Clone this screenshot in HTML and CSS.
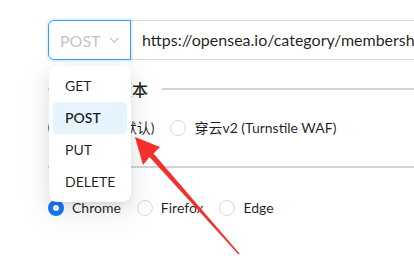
FILE: index.html
```html
<!DOCTYPE html>
<html lang="zh-CN">
<head>
<meta charset="utf-8">
<link rel="stylesheet" href="styles.css">
</head>
<body>
<div class="page">
  <div class="input-group">
    <div class="select">
      <span class="select-value">POST</span>
      <svg class="chevron" viewBox="0 0 12 12" width="12" height="12"><path d="M1 3.5 L6 8.5 L11 3.5" fill="none" stroke="currentColor" stroke-width="1.2"/></svg>
    </div>
    <div class="url">https://opensea.io/category/memberships</div>
  </div>

  <div class="divider">
    <span class="line short"></span>
    <span class="divider-text">穿云版本</span>
    <span class="line long"></span>
  </div>

  <div class="radio-row">
    <label class="radio"><span class="dot checked"></span><span class="radio-label">穿云v1 (默认)</span></label>
    <label class="radio"><span class="dot"></span><span class="radio-label">穿云v2 (Turnstile WAF)</span></label>
  </div>

  <div class="divider">
    <span class="line short"></span>
    <span class="divider-text">指纹</span>
    <span class="line long"></span>
  </div>

  <div class="radio-row browsers">
    <label class="radio"><span class="dot checked"></span><span class="radio-label">Chrome</span></label>
    <label class="radio"><span class="dot"></span><span class="radio-label">Firefox</span></label>
    <label class="radio"><span class="dot"></span><span class="radio-label">Edge</span></label>
  </div>

  <div class="dropdown">
    <div class="option">GET</div>
    <div class="option selected">POST</div>
    <div class="option">PUT</div>
    <div class="option">DELETE</div>
  </div>

  <svg class="arrow" viewBox="0 0 414 267" width="414" height="267">
    <polygon points="135,137 160,147 153.5,153.5 239.5,253.5 238.5,254.5 149.5,157 143,165" fill="#f5302b"/>
  </svg>
</div>
</body>
</html>
```

FILE: styles.css
```css
* { box-sizing: border-box; }
html, body { margin: 0; padding: 0; background: #fff; }
body {
  font-family: Lato, "Noto Sans CJK SC", sans-serif;
  color: rgba(0, 0, 0, 0.88);
}
.page {
  position: relative;
  width: 414px;
  height: 267px;
  overflow: hidden;
  padding: 20px 0 0 48px;
}
.input-group {
  display: flex;
  width: 560px;
  height: 40px;
}
.select {
  width: 83px;
  height: 40px;
  border: 1px solid #4096ff;
  border-radius: 6px 0 0 6px;
  box-shadow: 0 0 0 2px rgba(5, 145, 255, 0.1);
  display: flex;
  align-items: center;
  padding: 0 11px;
  gap: 8px;
  position: relative;
  z-index: 1;
}
.select-value {
  font-size: 16px;
  color: #c4c4c4;
  flex: 1;
}
.chevron { color: #bfbfbf; }
.url {
  flex: 1;
  height: 40px;
  border: 1px solid #d9d9d9;
  border-left: none;
  font-size: 16px;
  line-height: 38px;
  padding: 0 11px;
  white-space: nowrap;
  overflow: hidden;
}
.divider {
  display: flex;
  align-items: center;
  height: 24px;
  margin-top: 17px;
  gap: 14px;
}
.radio-row { margin-top: 16px; }
.radio-row.browsers { margin-top: 18px; }
.radio-row + .divider { margin-top: 16px; }
.line {
  height: 2px;
  background: #d4d4d4;
}
.line.short { width: 22px; }
.line.long { flex: 1; }
.divider-text {
  font-size: 16px;
  font-weight: 500;
  white-space: nowrap;
}
.radio-row {
  display: flex;
  height: 22px;
  align-items: center;
}
.radio {
  display: flex;
  align-items: center;
  margin-right: 8px;
  font-size: 14px;
}
.radio-label { padding: 0 8px; line-height: 22px; }
.dot {
  width: 16px;
  height: 16px;
  border-radius: 50%;
  border: 1px solid #d9d9d9;
  background: #fff;
}
.dot.checked { border: 5px solid #1677ff; }
.dropdown {
  position: absolute;
  left: 49px;
  top: 66px;
  width: 82px;
  padding: 4px;
  background: #fff;
  border-radius: 8px;
  box-shadow: 0 6px 16px 0 rgba(0, 0, 0, 0.08), 0 3px 6px -4px rgba(0, 0, 0, 0.12), 0 9px 28px 8px rgba(0, 0, 0, 0.05);
  z-index: 2;
}
.option {
  height: 32px;
  line-height: 22px;
  padding: 5px 12px;
  font-size: 14px;
  border-radius: 4px;
  color: rgba(0, 0, 0, 0.88);
}
.option.selected {
  background: #e6f4ff;
  font-weight: 600;
}
.arrow {
  position: absolute;
  left: 0;
  top: 0;
  z-index: 3;
}
```
